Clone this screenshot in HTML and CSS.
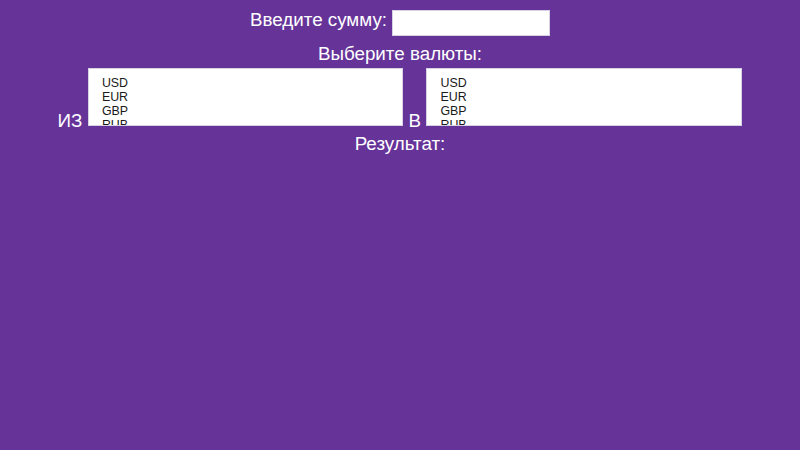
FILE: index.html
```html
<!DOCTYPE html>
<html lang="ru">
<head>
<meta charset="utf-8">
<title>Конвертер валют</title>
<link rel="stylesheet" href="styles.css">
</head>
<body>
  <div class="row amount-row">
    <label class="label" for="amount">Введите сумму:</label>
    <input class="amount-input" id="amount" type="text">
  </div>
  <div class="row title-row">
    <span class="label">Выберите валюты:</span>
  </div>
  <div class="row select-row">
    <span class="label">ИЗ</span>
    <div class="listbox">
      <div class="option">USD</div>
      <div class="option">EUR</div>
      <div class="option">GBP</div>
      <div class="option">RUB</div>
    </div>
    <span class="label">В</span>
    <div class="listbox listbox-to">
      <div class="option">USD</div>
      <div class="option">EUR</div>
      <div class="option">GBP</div>
      <div class="option">RUB</div>
    </div>
  </div>
  <div class="row result-row">
    <span class="label">Результат:</span>
  </div>
</body>
</html>
```

FILE: styles.css
```css
html, body {
  margin: 0;
  padding: 0;
}

body {
  background: #663399;
  color: #ffffff;
  font-family: "Liberation Sans", Arial, sans-serif;
  font-size: 18.8px;
  line-height: 22px;
  height: 450px;
  overflow: hidden;
}

.row {
  display: flex;
  justify-content: center;
}

.label {
  display: block;
  white-space: nowrap;
}

.amount-row {
  padding-top: 9px;
  align-items: flex-start;
  gap: 5px;
}

.amount-input {
  box-sizing: border-box;
  width: 158px;
  height: 26px;
  margin: 1px 0 0 0;
  border: 1px solid #d8d0e4;
  background: #ffffff;
  padding: 0 4px;
  font-family: "Liberation Sans", Arial, sans-serif;
  font-size: 13px;
}

.title-row {
  margin-top: 7px;
}

.select-row {
  margin-top: 3px;
  align-items: flex-end;
  gap: 5.5px;
}

.listbox {
  box-sizing: border-box;
  width: 315px;
  height: 58px;
  margin-bottom: 6px;
  background: #ffffff;
  border: 1px solid #d8d0e4;
  padding: 7px 0 0 13px;
  overflow: hidden;
  color: #1a1a1a;
  font-size: 12.4px;
  line-height: 14px;
}

.listbox-to {
  width: 316px;
}

.option {
  white-space: nowrap;
}

.result-row {
  margin-top: 1px;
}
```
